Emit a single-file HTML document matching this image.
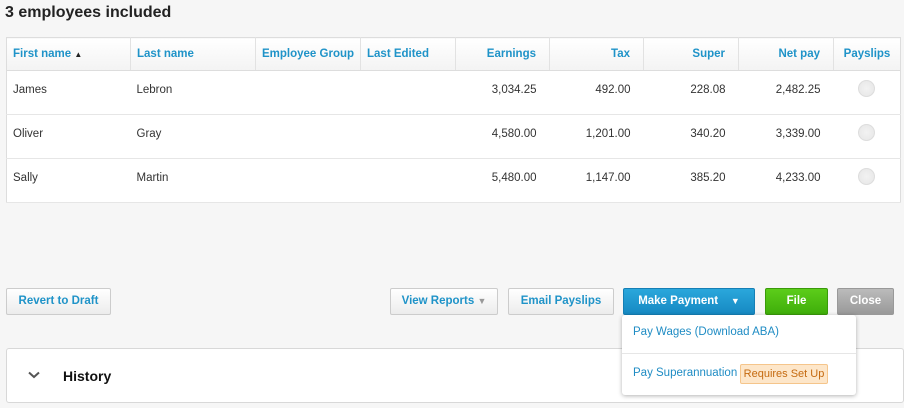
<!DOCTYPE html><html><head><style>
*{box-sizing:border-box}body{margin:0;width:904px;height:408px;background:#f6f6f6;font-family:"Liberation Sans",Arial,sans-serif;font-size:11.5px;color:#333;position:relative;overflow:hidden}
.a{position:absolute}
h1{position:absolute;left:5px;top:4px;margin:0;font-size:16px;font-weight:bold;color:#222}
table{position:absolute;left:6px;top:37px;width:895px;border-collapse:collapse;background:#fff;border:1px solid #ddd;table-layout:fixed}
th{height:33px;color:#1f93c8;font-weight:bold;text-align:left;padding:0 6px;border-right:1px solid #e2e2e2;border-bottom:1px solid #ddd;background:linear-gradient(#fff,#f3f3f3);white-space:nowrap}
td{height:44px;padding:0 6px 5px;border-bottom:1px solid #e6e6e6}
.r{text-align:right;padding-right:13px}
.rad{display:inline-block;width:17px;height:17px;border-radius:50%;border:1px solid #ddd;background:radial-gradient(#f2f2f2,#e6e6e6)}
.b{position:absolute;top:288px;height:27px;border:1px solid #ccc;border-radius:2px;background:linear-gradient(#fff,#ececec);color:#1f93c8;font-weight:bold;text-align:center;line-height:25px}
</style></head><body>
<h1>3 employees included</h1>
<table><colgroup><col style="width:124px"><col style="width:125px"><col style="width:105px"><col style="width:95px"><col style="width:94px"><col style="width:94px"><col style="width:95px"><col style="width:95px"><col></colgroup>
<tr><th>First name <span style="color:#222;font-size:8px">▲</span></th><th>Last name</th><th>Employee Group</th><th>Last Edited</th><th class="r">Earnings</th><th class="r">Tax</th><th class="r">Super</th><th class="r">Net pay</th><th style="text-align:center;border-right:0">Payslips</th></tr>
<tr><td>James</td><td>Lebron</td><td></td><td></td><td class="r">3,034.25</td><td class="r">492.00</td><td class="r">228.08</td><td class="r">2,482.25</td><td style="text-align:center"><span class="rad"></span></td></tr>
<tr><td>Oliver</td><td>Gray</td><td></td><td></td><td class="r">4,580.00</td><td class="r">1,201.00</td><td class="r">340.20</td><td class="r">3,339.00</td><td style="text-align:center"><span class="rad"></span></td></tr>
<tr><td>Sally</td><td>Martin</td><td></td><td></td><td class="r">5,480.00</td><td class="r">1,147.00</td><td class="r">385.20</td><td class="r">4,233.00</td><td style="text-align:center"><span class="rad"></span></td></tr></table>
<div class="b" style="left:6px;width:105px">Revert to Draft</div>
<div class="b" style="left:390px;width:108px">View Reports <span style="color:#999;font-size:9px">▼</span></div>
<div class="b" style="left:508px;width:106px">Email Payslips</div>
<div class="b" style="left:623px;width:132px;background:linear-gradient(#2aa7dc,#1689c2);border-color:#157fb5;color:#fff">Make Payment &nbsp;&nbsp;&nbsp;<span style="font-size:9px">▼</span></div>
<div class="b" style="left:765px;width:63px;background:linear-gradient(#5ccd1a,#3fae0a);border-color:#3a9a0a;color:#fff">File</div>
<div class="b" style="left:837px;width:57px;background:linear-gradient(#bbb,#999);border-color:#999;color:#fff">Close</div>
<div class="a" style="left:6px;top:348px;width:898px;height:55px;background:#fff;border:1px solid #d8d8d8;border-radius:3px">
<svg class="a" style="left:21px;top:22px" width="12" height="8"><path d="M1 1.5L6 6L11 1.5" fill="none" stroke="#555" stroke-width="2"/></svg>
<span class="a" style="left:56px;top:19px;font-size:14px;font-weight:bold;color:#111">History</span></div>
<div class="a" style="left:622px;top:315px;width:234px;height:80px;background:#fff;border-radius:3px;box-shadow:0 1px 4px rgba(0,0,0,.3)">
<div class="a" style="left:11px;top:11px;color:#1f8cc4">Pay Wages (Download ABA)</div>
<div class="a" style="left:0;top:38px;width:234px;border-top:1px solid #e6e6e6"></div>
<div class="a" style="left:11px;top:52px;color:#1f8cc4">Pay Superannuation</div>
<div class="a" style="left:118px;top:49px;width:88px;height:20px;background:#fde6c9;border:1px solid #f5c58b;border-radius:2px;color:#c56a10;font-size:11px;text-align:center;line-height:18px">Requires Set Up</div></div>
</body></html>
